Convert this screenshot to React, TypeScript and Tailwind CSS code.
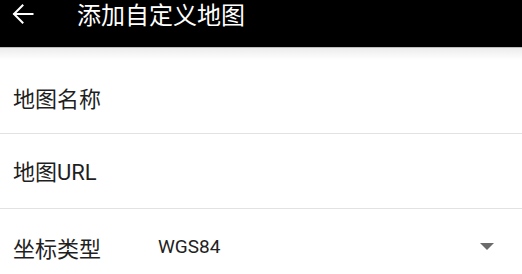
import React from "react";

export default function App() {
  const cjk = { fontFamily: '"Noto Sans CJK SC", "Noto Sans", sans-serif' };
  return (
    <div className="w-[522px] h-[274px] overflow-hidden bg-white" style={cjk}>
      <div className="h-[47px] bg-black flex items-start">
        <div className="h-[28px] flex items-center w-full">
          <div className="w-[77px] flex items-center pl-[12px]">
            <svg width="22" height="22" viewBox="0 0 22 22" fill="none" stroke="white" strokeWidth="2" strokeLinecap="square">
              <path d="M20.5 11H2.5" />
              <path d="M10.5 2.5L2 11L10.5 19.5" />
            </svg>
          </div>
          <span className="text-[24px] leading-[28px] text-white">添加自定义地图</span>
        </div>
      </div>
      <div className="h-px bg-[#bdbdbd]" />
      <div className="h-[12px] bg-gradient-to-b from-[#ececec] to-white" />
      <div className="h-[74px] flex items-center pl-[13px] border-b border-[#e2e2e2]">
        <span className="text-[22px] leading-[28px] text-[#1f1f1f]">地图名称</span>
      </div>
      <div className="h-[75px] flex items-center pl-[13px] border-b border-[#e2e2e2]">
        <span className="text-[22px] leading-[28px] text-[#1f1f1f]">
          地图<span style={{ fontFamily: 'Roboto, sans-serif' }}>URL</span>
        </span>
      </div>
      <div className="h-[75px] flex items-center pl-[13px] pr-[28px]">
        <span className="text-[22px] leading-[28px] text-[#1f1f1f] w-[145px]">坐标类型</span>
        <span className="text-[19px] leading-[28px] text-[#222]" style={{ fontFamily: 'Roboto, sans-serif' }}>WGS84</span>
        <div className="flex-1" />
        <svg width="14" height="7" viewBox="0 0 14 7">
          <path d="M0 0H14L7 7Z" fill="#6b6b6b" />
        </svg>
      </div>
    </div>
  );
}
